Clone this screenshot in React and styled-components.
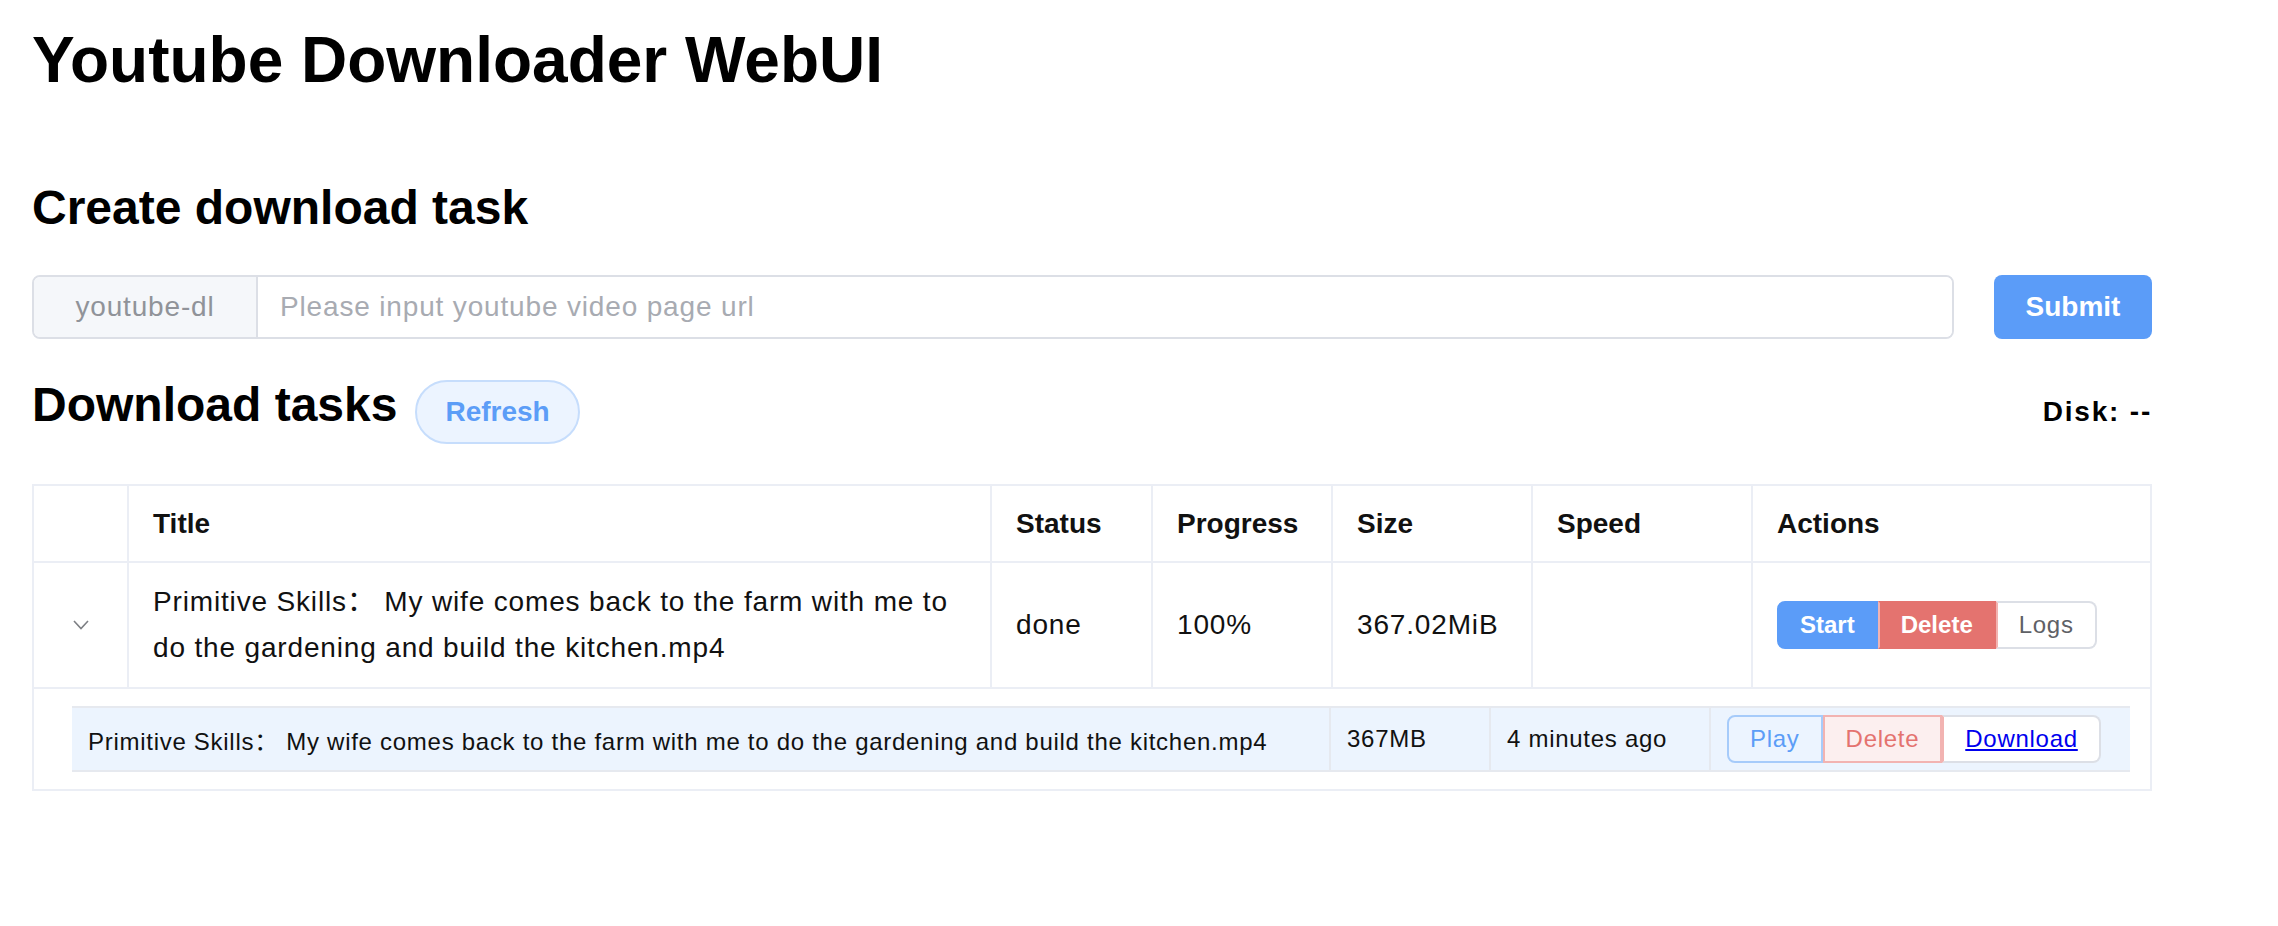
import React from 'react';
import styled, { createGlobalStyle } from 'styled-components';

const sans = `"Liberation Sans", "Noto Sans CJK SC", Arial, sans-serif`;

const GlobalStyle = createGlobalStyle`
  body {
    margin: 0;
    background: #fff;
    font-family: ${sans};
    color: #111;
  }
`;

const Page = styled.main`
  width: 2120px;
  padding: 23px 0 0 32px;
`;

const Title = styled.h1`
  margin: 0;
  font-size: 64px;
  line-height: 74px;
  font-weight: 700;
  color: #000;
`;

const SectionTitle = styled.h2`
  margin: ${p => p.$top || 0}px 0 0;
  font-size: 48px;
  line-height: 56px;
  font-weight: 700;
  color: #000;
`;

const FormRow = styled.div`
  display: flex;
  gap: 40px;
  margin-top: 39px;
`;

const InputGroup = styled.div`
  flex: 1;
  display: flex;
  height: 64px;
  box-sizing: border-box;
  border: 2px solid #dcdfe6;
  border-radius: 8px;
  overflow: hidden;
`;

const Prepend = styled.div`
  width: 222px;
  flex: none;
  display: flex;
  align-items: center;
  justify-content: center;
  background: #f5f7fa;
  border-right: 2px solid #dcdfe6;
  color: #909399;
  font-size: 28px;
  letter-spacing: 0.03em;
`;

const UrlInput = styled.input`
  flex: 1;
  border: none;
  outline: none;
  padding: 0 22px;
  font-family: ${sans};
  font-size: 28px;
  letter-spacing: 0.03em;
  color: #303133;
  background: #fff;

  &::placeholder {
    color: #a8abb2;
  }
`;

const SubmitButton = styled.button`
  height: 64px;
  width: 158px;
  border: none;
  border-radius: 8px;
  background: #5b9cf8;
  color: #fff;
  font-family: ${sans};
  font-size: 28px;
  font-weight: 700;
`;

const TasksBar = styled.div`
  display: flex;
  align-items: baseline;
  margin-top: 38px;
`;

const RefreshButton = styled.button`
  height: 64px;
  margin-left: 18px;
  padding: 0 28px;
  border: 2px solid #c6ddfc;
  border-radius: 32px;
  background: #ecf4ff;
  color: #5c9df7;
  font-family: ${sans};
  font-size: 28px;
  font-weight: 700;
`;

const Disk = styled.span`
  margin-left: auto;
  font-size: 28px;
  font-weight: 700;
  letter-spacing: 1.8px;
  color: #000;
`;

const TaskTable = styled.div`
  margin-top: 40px;
  display: grid;
  grid-template-columns: 95px 863px 161px 180px 200px 220px 1fr;
  border: 2px solid #ebeef5;
`;

const Cell = styled.div`
  box-sizing: border-box;
  display: flex;
  align-items: center;
  padding: 0 24px;
  height: ${p => (p.$head ? 77 : 126)}px;
  border-bottom: 2px solid #ebeef5;
  border-right: ${p => (p.$last ? 'none' : '2px solid #ebeef5')};
  font-size: 28px;
  line-height: 46px;
  font-weight: ${p => (p.$head ? 700 : 400)};
  letter-spacing: ${p => (p.$head ? 0 : '0.03em')};
  justify-content: ${p => (p.$center ? 'center' : 'flex-start')};
`;

const ExpandCell = styled.div`
  grid-column: 1 / -1;
  padding: 17px 20px 17px 38px;
`;

const SubTable = styled.div`
  display: grid;
  grid-template-columns: 1259px 160px 220px 1fr;
  background: #ecf4fe;
  border-top: 2px solid #e6e9ef;
  border-bottom: 2px solid #e6e9ef;
`;

const SubCell = styled.div`
  box-sizing: border-box;
  height: 62px;
  display: flex;
  align-items: center;
  padding: 0 16px;
  border-right: ${p => (p.$last ? 'none' : '2px solid #e6e9ef')};
  font-size: 24px;
  letter-spacing: 0.03em;
  white-space: nowrap;
`;

const ButtonGroup = styled.div`
  display: flex;
`;

const tones = {
  primary: { bg: '#5b9cf8', border: '#5b9cf8', color: '#fff', weight: 700 },
  danger: { bg: '#e4736f', border: '#e4736f', color: '#fff', weight: 700 },
  plain: { bg: '#fff', border: '#dcdfe6', color: '#5f6166', weight: 400 },
  primaryPlain: { bg: '#ecf4ff', border: '#a6cbfa', color: '#5c9df7', weight: 400 },
  dangerPlain: { bg: '#fcefef', border: '#f2b3b1', color: '#e4736f', weight: 400 },
};

const Btn = styled.button`
  height: 48px;
  padding: 0 21px;
  border: 2px solid ${p => tones[p.$tone].border};
  background: ${p => tones[p.$tone].bg};
  color: ${p => tones[p.$tone].color};
  font-family: ${sans};
  font-size: 24px;
  font-weight: ${p => tones[p.$tone].weight};
  letter-spacing: ${p => (tones[p.$tone].weight === 400 ? '0.03em' : 0)};
  border-radius: 0;

  &:first-child {
    border-radius: 8px 0 0 8px;
  }
  &:last-child {
    border-radius: 0 8px 8px 0;
  }
  & + & {
    border-left-color: ${p => (p.$tone === 'danger' ? '#eea3a0' : tones[p.$tone].border)};
  }
`;

const LinkText = styled.a`
  color: #0000ee;
  text-decoration: underline;
`;

const Chevron = () => (
  <svg width="16" height="10" viewBox="0 0 16 10">
    <polyline points="1,1 8,8.5 15,1" fill="none" stroke="#7d7f84" strokeWidth="1.6" />
  </svg>
);

const fileName =
  'Primitive Skills\uFF1A My wife comes back to the farm with me to do the gardening and build the kitchen.mp4';

const App = () => {
  return (
    <Page>
      <GlobalStyle />
      <Title>Youtube Downloader WebUI</Title>
      <SectionTitle $top={83}>Create download task</SectionTitle>
      <FormRow>
        <InputGroup>
          <Prepend>youtube-dl</Prepend>
          <UrlInput placeholder="Please input youtube video page url" />
        </InputGroup>
        <SubmitButton>Submit</SubmitButton>
      </FormRow>
      <TasksBar>
        <SectionTitle>Download tasks</SectionTitle>
        <RefreshButton>Refresh</RefreshButton>
        <Disk>Disk: --</Disk>
      </TasksBar>
      <TaskTable>
        <Cell $head />
        <Cell $head>Title</Cell>
        <Cell $head>Status</Cell>
        <Cell $head>Progress</Cell>
        <Cell $head>Size</Cell>
        <Cell $head>Speed</Cell>
        <Cell $head $last>Actions</Cell>

        <Cell $center><Chevron /></Cell>
        <Cell>{fileName}</Cell>
        <Cell>done</Cell>
        <Cell>100%</Cell>
        <Cell>367.02MiB</Cell>
        <Cell />
        <Cell $last>
          <ButtonGroup>
            <Btn $tone="primary">Start</Btn>
            <Btn $tone="danger">Delete</Btn>
            <Btn $tone="plain">Logs</Btn>
          </ButtonGroup>
        </Cell>

        <ExpandCell>
          <SubTable>
            <SubCell>{fileName}</SubCell>
            <SubCell>367MB</SubCell>
            <SubCell>4 minutes ago</SubCell>
            <SubCell $last>
              <ButtonGroup>
                <Btn $tone="primaryPlain">Play</Btn>
                <Btn $tone="dangerPlain">Delete</Btn>
                <Btn $tone="plain"><LinkText href="#">Download</LinkText></Btn>
              </ButtonGroup>
            </SubCell>
          </SubTable>
        </ExpandCell>
      </TaskTable>
    </Page>
  );
};

export default App;
